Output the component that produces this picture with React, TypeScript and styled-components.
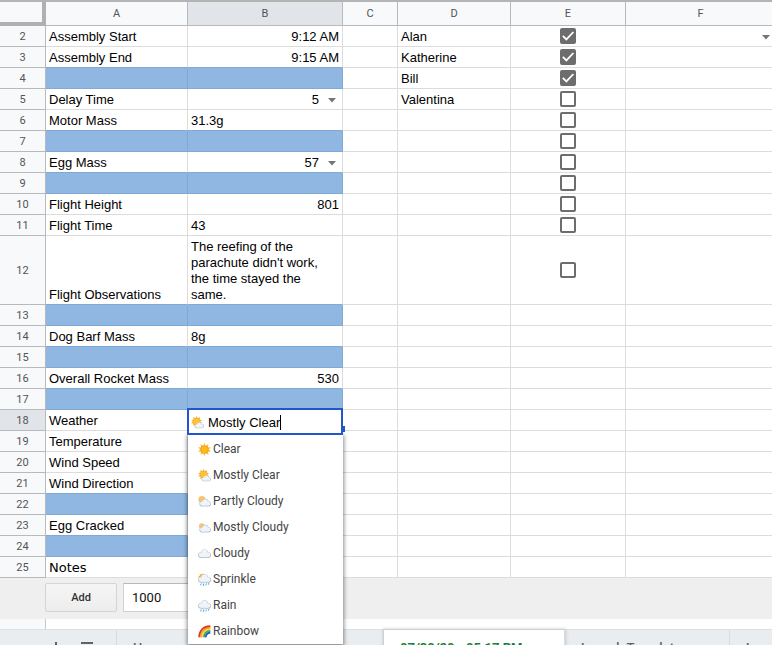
import React, { useState } from "react";
import styled, { createGlobalStyle, css } from "styled-components";

const GlobalStyle = createGlobalStyle`
  * { box-sizing: border-box; }
  body {
    margin: 0;
    background: #fff;
    color: #000;
    font-family: "Liberation Sans", Arial, sans-serif;
    font-size: 13px;
  }
`;

const Page = styled.main`
  height: 100vh;
  overflow: hidden;
  border-top: 2px solid #b4b4b4;
`;

const Sheet = styled.table`
  width: calc(100% + 4px);
  table-layout: fixed;
  border-collapse: separate;
  border-spacing: 0;
`;

const Col = styled.col<{ $width?: number }>`
  width: ${(p) => (p.$width ? `${p.$width}px` : "auto")};
`;

const headerFont = css`
  font: 400 11px Roboto, sans-serif;
  color: #50555b;
  text-align: center;
  padding: 0;
`;

const Corner = styled.th`
  padding: 0;
  background: #f8f9fa;
  border-right: 4px solid #b0b0b0;
  border-bottom: 4px solid #b0b0b0;
`;

const ColumnHeader = styled.th<{ $active?: boolean }>`
  ${headerFont}
  height: 24px;
  background: ${(p) => (p.$active ? "#e1e4e9" : "#f8f9fa")};
  border-right: 1px solid #b8b9ba;
  border-bottom: 1px solid #b8b9ba;
`;

const RowHeader = styled.th<{ $active?: boolean }>`
  ${headerFont}
  background: ${(p) => (p.$active ? "#e1e4e9" : "#f8f9fa")};
  border-right: 1px solid #b8b9ba;
  border-bottom: 1px solid #b8b9ba;
`;

const Row = styled.tr<{ $height: number }>`
  height: ${(p) => p.$height}px;
`;

const Cell = styled.td<{ $filled?: boolean; $fillBelow?: boolean; $align?: string; $wide?: boolean }>`
  position: relative;
  height: inherit;
  padding: 1px 3px;
  line-height: 16px;
  vertical-align: bottom;
  white-space: pre-line;
  text-align: ${(p) => p.$align ?? "left"};
  background: ${(p) => (p.$filled ? "#8fb7e2" : "#fff")};
  border-right: 1px solid ${(p) => (p.$filled ? "#80a9d4" : "#dcdcdc")};
  border-bottom: 1px solid ${(p) => (p.$filled || p.$fillBelow ? "#80a9d4" : "#dcdcdc")};
  ${(p) => p.$wide && css`font-family: "DejaVu Sans", Verdana, sans-serif;`}
`;

const CheckCell = styled(Cell)`
  vertical-align: middle;
  text-align: center;
  padding: 0;
`;

const Check = styled.input`
  appearance: none;
  display: block;
  width: 16px;
  height: 16px;
  margin: 0 auto;
  border: 2px solid #6d6d6d;
  border-radius: 2px;
  background: #fff;
  &:checked {
    background: #6d6d6d;
  }
`;

const CheckBox = styled.label`
  display: grid;
  justify-content: center;
  > * { grid-area: 1 / 1; }
  svg { pointer-events: none; }
`;

const CellButton = styled.button`
  display: flex;
  width: 100%;
  align-items: center;
  justify-content: flex-end;
  gap: 9px;
  padding: 0 3px 0 0;
  border: 0;
  background: none;
  font: inherit;
  line-height: 16px;
  color: inherit;
`;

const EdgeButton = styled(CellButton)`
  height: 16px;
  padding: 0 2px 0 0;
`;

const Editor = styled.div`
  position: absolute;
  z-index: 3;
  top: -2px;
  left: -1px;
  right: -1px;
  height: 27px;
  display: flex;
  align-items: center;
  gap: 4px;
  padding: 1px 2px 0;
  background: #fff;
  border: 2px solid #2257c9;
`;

const EditorInput = styled.input`
  field-sizing: content;
  min-width: 0;
  padding: 0;
  border: 0;
  outline: 0;
  background: none;
  color: #000;
  font: 13px "Liberation Sans", Arial, sans-serif;
`;

const Caret = styled.span`
  width: 1px;
  height: 15px;
  margin-left: -4px;
  background: #000;
`;

const FillHandle = styled.span`
  position: absolute;
  z-index: 2;
  right: -3px;
  top: 16px;
  width: 6px;
  height: 6px;
  background: #2257c9;
`;

const Menu = styled.ul`
  position: absolute;
  z-index: 2;
  top: 25px;
  left: 0;
  right: -1px;
  margin: 0;
  padding: 1px 0 0;
  list-style: none;
  background: #fff;
  box-shadow: 0 1px 4px 1px rgba(0, 0, 0, 0.45);
`;

const Option = styled.button`
  display: flex;
  align-items: center;
  gap: 2px;
  width: 100%;
  height: 26px;
  padding: 0 10px;
  border: 0;
  background: none;
  font: 12px Roboto, sans-serif;
  color: #444;
`;

const AddRows = styled.form`
  display: flex;
  gap: 6px;
  height: 41px;
  padding: 5px 0 7px 45px;
  background: #efefef;
`;

const AddButton = styled.button`
  width: 72px;
  border: 1px solid #d4d4d4;
  border-radius: 2px;
  background: linear-gradient(#f5f5f5, #ededed);
  font: 500 11px Roboto, sans-serif;
  color: #333;
`;

const AddCount = styled.input`
  width: 80px;
  border: 1px solid #d0d0d0;
  border-top-color: #b8b8b8;
  background: #fff;
  padding: 0 8px;
  font: 13px Roboto, sans-serif;
  color: #111;
`;

const Gutter = styled.div`
  height: 10px;
  width: 46px;
  border-right: 1px solid #c8c8c8;
  background: #f8f9fa;
`;

const TabBar = styled.nav`
  display: flex;
  height: 35px;
  background: #e9edef;
  border-top: 1px solid #dde0e2;
  padding-left: 44px;
`;

const BarButton = styled.button`
  flex: none;
  display: grid;
  place-items: center;
  width: 24px;
  padding: 2px 0 0;
  margin-right: 7px;
  border: 0;
  background: none;
`;

const TabStrip = styled.div`
  display: flex;
  margin-left: 10px;
  border-left: 1px solid #d8dcde;
`;

const Tab = styled.button<{ $active?: boolean; $width: number }>`
  flex: none;
  width: ${(p) => p.$width}px;
  padding: 0 16px;
  border: 0;
  border-right: 1px solid #d8dcde;
  text-align: left;
  white-space: nowrap;
  background: ${(p) => (p.$active ? "#fff" : "transparent")};
  color: ${(p) => (p.$active ? "#188038" : "#5f6368")};
  font: ${(p) => (p.$active ? 700 : 500)} 13px Roboto, sans-serif;
  box-shadow: ${(p) => (p.$active ? "0 0 3px 1px #c5c9cb" : "none")};
`;

type Sky = "clear" | "mostlyClear" | "partly" | "mostlyCloudy" | "cloudy" | "sprinkle" | "rain" | "rainbow";

const rays = "M10 0L11.8 4.2L15.9 1.9L15.5 6.5L19.8 7L16.6 10L19.8 13L15.5 13.5L15.9 18.1L11.8 15.8L10 20L8.2 15.8L4.1 18.1L4.5 13.5L.2 13L3.4 10L.2 7L4.5 6.5L4.1 1.9L8.2 4.2Z";

const Cloud = ({ transform }: { transform?: string }) => (
  <g transform={transform}>
    <g fill="#aebccb">
      <circle cx="4.6" cy="13.4" r="4.4" />
      <circle cx="10" cy="10.4" r="5.6" />
      <circle cx="15.6" cy="13.4" r="4.4" />
      <path d="M4.6 12h11v5.8h-11z" />
    </g>
    <g fill="#f0f4f8">
      <circle cx="4.8" cy="13" r="3.6" />
      <circle cx="10" cy="10.2" r="4.8" />
      <circle cx="15.4" cy="13" r="3.6" />
      <path d="M4.8 12h10.6v4.6h-10.6z" />
    </g>
  </g>
);

function SkyIcon({ kind }: { kind: Sky }) {
  if (kind === "rainbow")
    return (
      <svg width="13" height="13" viewBox="0 0 20 20" fill="none" aria-hidden="true">
        <path d="M2 19C2 9 8 2 19 2" stroke="#d93520" strokeWidth="3" />
        <path d="M4.5 19C5 10 10 5 19 4.5" stroke="#f59a24" strokeWidth="2.6" />
        <path d="M6.5 19C7 12 11 7 19 6.5" stroke="#f6dd35" strokeWidth="2.4" />
        <path d="M9 19C9 13 13 9 19 9" stroke="#38a957" strokeWidth="2.6" />
        <path d="M11.5 19C12 14 14 12 19 11.5" stroke="#2460d0" strokeWidth="3" />
      </svg>
    );
  const sunny = kind === "mostlyClear";
  const wet = kind === "sprinkle" || kind === "rain";
  return (
    <svg width="13" height="13" viewBox="0 0 20 20" aria-hidden="true">
      {kind === "clear" && (
        <>
          <path d={rays} fill="#f8b63a" />
          <circle cx="10" cy="10" r="5.4" fill="#ffbd1a" stroke="#f0911b" strokeWidth=".8" />
        </>
      )}
      {(sunny || kind === "sprinkle") && (
        <g transform={sunny ? "scale(.86)" : "scale(.66)"}>
          <path d={rays} fill="#f6a92b" />
          <circle cx="10" cy="10" r="5.6" fill="#ffc42c" />
        </g>
      )}
      {(kind === "partly" || kind === "mostlyCloudy") && (
        <circle cx="6" cy={kind === "partly" ? 7 : 8} r={kind === "partly" ? 5.5 : 4.5} fill="#f8c373" />
      )}
      {kind !== "clear" && (
        <Cloud transform={sunny ? "translate(5.5 6) scale(.72)" : wet ? "translate(0 -3)" : kind === "cloudy" ? "translate(0 -1)" : "translate(2 1.5) scale(.9)"} />
      )}
      {wet && <path d="M5 16l-1 3M9 16l-1 4M13 16l-1 3M17 15l-1 3" stroke="#52a7d8" strokeWidth="1.5" />}
    </svg>
  );
}

const Arrow = () => (
  <svg width="8" height="5" viewBox="0 0 8 5" aria-hidden="true">
    <path d="M0 0h8L4 4.5z" fill="#757575" />
  </svg>
);

const options: [Sky, string][] = [
  ["clear", "Clear"],
  ["mostlyClear", "Mostly Clear"],
  ["partly", "Partly Cloudy"],
  ["mostlyCloudy", "Mostly Cloudy"],
  ["cloudy", "Cloudy"],
  ["sprinkle", "Sprinkle"],
  ["rain", "Rain"],
  ["rainbow", "Rainbow"],
];

type RowData = { a?: string; b?: string; right?: boolean; select?: boolean; d?: string; filled?: boolean };

const rows: Record<number, RowData> = {
  2: { a: "Assembly Start", b: "9:12 AM", right: true, d: "Alan" },
  3: { a: "Assembly End", b: "9:15 AM", right: true, d: "Katherine" },
  4: { filled: true, d: "Bill" },
  5: { a: "Delay Time", b: "5", select: true, d: "Valentina" },
  6: { a: "Motor Mass", b: "31.3g" },
  7: { filled: true },
  8: { a: "Egg Mass", b: "57", select: true },
  9: { filled: true },
  10: { a: "Flight Height", b: "801", right: true },
  11: { a: "Flight Time", b: "43" },
  12: { a: "Flight Observations", b: "The reefing of the parachute didn't work, the time stayed the same." },
  13: { filled: true },
  14: { a: "Dog Barf Mass", b: "8g" },
  15: { filled: true },
  16: { a: "Overall Rocket Mass", b: "530", right: true },
  17: { filled: true },
  18: { a: "Weather" },
  19: { a: "Temperature" },
  20: { a: "Wind Speed" },
  21: { a: "Wind Direction" },
  22: { filled: true },
  23: { a: "Egg Cracked" },
  24: { filled: true },
  25: { a: "Notes" },
};

function WeatherEditor() {
  const [choice, setChoice] = useState(1);
  return (
    <>
      <Editor>
        <SkyIcon kind={options[choice][0]} />
        <EditorInput aria-label="Weather" value={options[choice][1]} readOnly />
        <Caret />
      </Editor>
      <Menu>
        {options.map(([kind, label], i) => (
          <li key={label}>
            <Option type="button" onClick={() => setChoice(i)}>
              <SkyIcon kind={kind} />
              {label}
            </Option>
          </li>
        ))}
      </Menu>
      <FillHandle />
    </>
  );
}

function TickBox({ row }: { row: number }) {
  const [on, setOn] = useState(row < 5);
  return (
    <CheckBox>
      <Check type="checkbox" aria-label={`Row ${row}`} checked={on} onChange={() => setOn(!on)} />
      {on && (
        <svg width="16" height="16" viewBox="0 0 16 16" fill="none" aria-hidden="true">
          <path d="M2.8 7.8l3.6 3.6L13.4 4" stroke="#fff" strokeWidth="1.8" />
        </svg>
      )}
    </CheckBox>
  );
}

export default function App() {
  return (
    <>
      <GlobalStyle />
      <Page>
        <Sheet>
          <colgroup>
            {[46, 142, 155, 55, 113, 115].map((w, i) => (
              <Col key={i} $width={w} />
            ))}
            <Col />
          </colgroup>
          <thead>
            <tr>
              <Corner />
              {["A", "B", "C", "D", "E", "F"].map((c) => (
                <ColumnHeader key={c} scope="col" $active={c === "B"}>{c}</ColumnHeader>
              ))}
            </tr>
          </thead>
          <tbody>
            {Object.entries(rows).map(([key, r]) => {
              const n = Number(key);
              const fill = { $filled: r.filled, $fillBelow: rows[n + 1]?.filled };
              return (
                <Row key={n} $height={n === 12 ? 69 : 21}>
                  <RowHeader scope="row" $active={n === 18}>{n}</RowHeader>
                  <Cell {...fill} $wide={n === 25}>{r.a}</Cell>
                  <Cell {...fill} $align={r.right ? "right" : "left"}>
                    {r.select ? <CellButton type="button">{r.b}<Arrow /></CellButton> : r.b}
                    {n === 18 && <WeatherEditor />}
                  </Cell>
                  <Cell />
                  <Cell>{r.d}</Cell>
                  <CheckCell>{n < 13 && <TickBox row={n} />}</CheckCell>
                  <Cell>{n === 2 && <EdgeButton type="button" aria-label="Choose a value"><Arrow /></EdgeButton>}</Cell>
                </Row>
              );
            })}
          </tbody>
        </Sheet>
        <AddRows>
          <AddButton type="button">Add</AddButton>
          <AddCount aria-label="Rows to add" defaultValue="1000" />
        </AddRows>
        <Gutter />
        <TabBar>
          <BarButton type="button" aria-label="Add sheet">
            <svg width="12" height="12" viewBox="0 0 12 12"><path d="M6 0v12M0 6h12" stroke="#5f6368" strokeWidth="2" /></svg>
          </BarButton>
          <BarButton type="button" aria-label="All sheets">
            <svg width="12" height="12" viewBox="0 0 12 12"><path d="M0 1h12M0 6h12M0 11h12" stroke="#5f6368" strokeWidth="2" /></svg>
          </BarButton>
          <TabStrip>
            <Tab type="button" $width={267}>Home</Tab>
            <Tab type="button" $active $width={181}>07/30/20 - 05:17 PM</Tab>
            <Tab type="button" $width={165}>Launch Template</Tab>
            <Tab type="button" $width={165}>Launch</Tab>
          </TabStrip>
        </TabBar>
      </Page>
    </>
  );
}
